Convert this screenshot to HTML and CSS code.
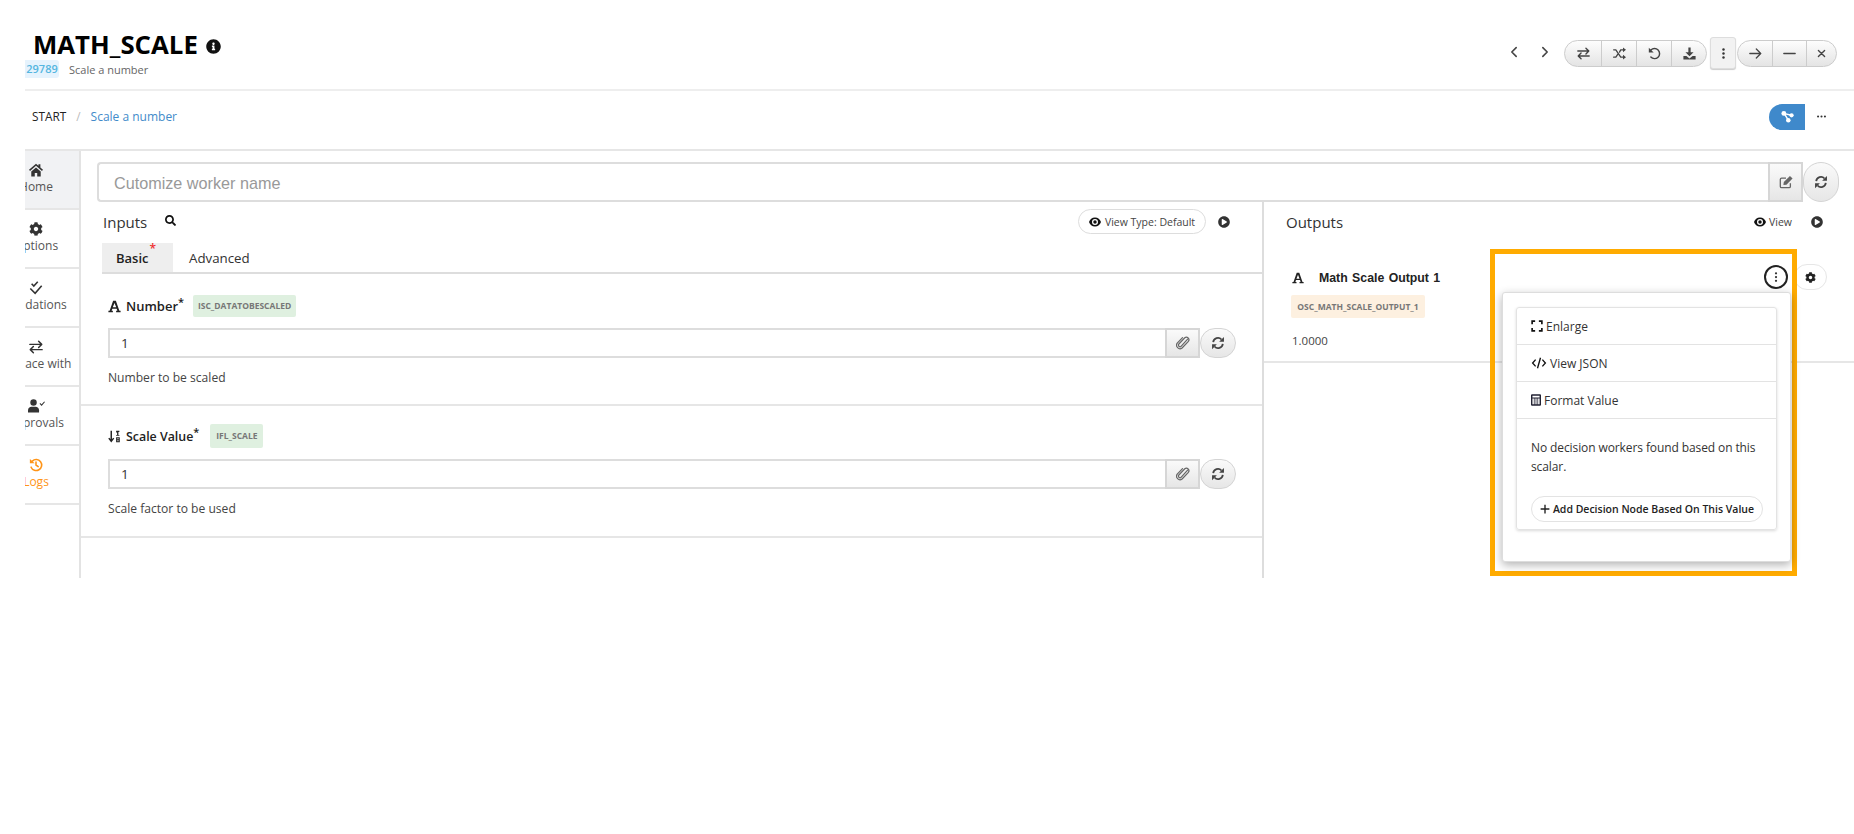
FILE: index.html
```html
<!DOCTYPE html>
<html lang="en">
<head>
<meta charset="UTF-8">
<title>MATH_SCALE</title>
<link rel="stylesheet" href="styles.css">
</head>
<body>

<!-- icon sprite -->
<svg class="sprite" xmlns="http://www.w3.org/2000/svg">
  <symbol id="i-info" viewBox="0 0 512 512"><path fill="currentColor" d="M256 8C119 8 8 119 8 256s111 248 248 248 248-111 248-248S393 8 256 8zm0 110c23 0 42 19 42 42s-19 42-42 42-42-19-42-42 19-42 42-42zm56 254c0 7-5 12-12 12h-88c-7 0-12-5-12-12v-24c0-7 5-12 12-12h12v-64h-12c-7 0-12-5-12-12v-24c0-7 5-12 12-12h64c7 0 12 5 12 12v100h12c7 0 12 5 12 12v24z"/></symbol>
  <symbol id="i-play" viewBox="0 0 512 512"><path fill="currentColor" d="M256 8C119 8 8 119 8 256s111 248 248 248 248-111 248-248S393 8 256 8zm115 273L195 382c-16 9-35-2-35-21V152c0-19 19-30 35-21l176 107c16 9 16 33 0 43z"/></symbol>
  <symbol id="i-search" viewBox="0 0 512 512"><path fill="currentColor" d="M505 442.7L405.3 343c-4.5-4.5-10.6-7-17-7H372c27.6-35.3 44-79.7 44-128C416 93.1 322.9 0 208 0S0 93.1 0 208s93.1 208 208 208c48.3 0 92.7-16.4 128-44v16.3c0 6.4 2.5 12.5 7 17l99.7 99.7c9.4 9.4 24.6 9.4 33.9 0l28.3-28.3c9.4-9.4 9.4-24.6.1-34zM208 336c-70.7 0-128-57.2-128-128 0-70.7 57.2-128 128-128 70.7 0 128 57.2 128 128 0 70.7-57.2 128-128 128z"/></symbol>
  <symbol id="i-cog" viewBox="0 0 512 512"><path fill="currentColor" d="M487.4 315.7l-42.6-24.6c4.3-23.2 4.3-47 0-70.2l42.6-24.6c4.9-2.8 7.1-8.6 5.5-14-11.1-35.6-30-67.8-54.7-94.6-3.8-4.1-10-5.1-14.8-2.3L380.8 110c-17.9-15.4-38.5-27.3-60.8-35.1V25.8c0-5.6-3.9-10.5-9.4-11.7-36.7-8.2-74.3-7.8-109.2 0-5.5 1.2-9.4 6.1-9.4 11.7V75c-22.2 7.9-42.8 19.8-60.8 35.1L88.7 85.5c-4.9-2.8-11-1.9-14.8 2.3-24.7 26.7-43.6 58.9-54.7 94.6-1.7 5.4.6 11.2 5.5 14L67.3 221c-4.3 23.2-4.3 47 0 70.2l-42.6 24.6c-4.9 2.8-7.1 8.6-5.5 14 11.1 35.6 30 67.8 54.7 94.6 3.8 4.1 10 5.1 14.8 2.3l42.6-24.6c17.9 15.4 38.5 27.3 60.8 35.1v49.2c0 5.6 3.9 10.5 9.4 11.7 36.7 8.2 74.3 7.8 109.2 0 5.5-1.2 9.4-6.1 9.4-11.7v-49.2c22.2-7.9 42.8-19.8 60.8-35.1l42.6 24.6c4.9 2.8 11 1.9 14.8-2.3 24.7-26.7 43.6-58.9 54.7-94.6 1.5-5.5-.7-11.3-5.6-14.1zM256 336c-44.1 0-80-35.9-80-80s35.9-80 80-80 80 35.9 80 80-35.9 80-80 80z"/></symbol>
  <symbol id="i-home" viewBox="0 0 16 16"><path fill="currentColor" d="M8 .8 0 7.600l1.200 1.400L8 3.200 14.800 9 16 7.600l-3-2.600V1.500h-2.200v1.600zM2.600 9.600V15.500h4v-4h2.800v4h4V9.600L8 5z"/></symbol>
  <symbol id="i-left" viewBox="0 0 16 16"><path fill="none" stroke="currentColor" stroke-width="1.800" stroke-linecap="round" stroke-linejoin="round" d="M10.500 3 5.500 8l5 5"/></symbol>
  <symbol id="i-right" viewBox="0 0 16 16"><path fill="none" stroke="currentColor" stroke-width="1.800" stroke-linecap="round" stroke-linejoin="round" d="m5.500 3 5 5-5 5"/></symbol>
  <symbol id="i-swap" viewBox="0 0 16 16"><path fill="none" stroke="currentColor" stroke-width="1.700" stroke-linecap="round" stroke-linejoin="round" d="M1 5h13.500M11 1.500 14.500 5 11 8.500M15 11H1.500M5 7.500 1.500 11 5 14.500"/></symbol>
  <symbol id="i-shuffle" viewBox="0 0 16 16"><path fill="none" stroke="currentColor" stroke-width="1.600" stroke-linecap="round" stroke-linejoin="round" d="M.8 3.500h2.700l6 9H13M.8 12.500h2.700L6 8.700M8 6.300 9.500 3.500H13"/><path fill="currentColor" d="M12.300 .5 16 3.500l-3.700 3zM12.300 9.500 16 12.500l-3.700 3z"/></symbol>
  <symbol id="i-undo" viewBox="0 0 16 16"><path fill="none" stroke="currentColor" stroke-width="1.800" stroke-linecap="round" d="M3.600 3.800A6.200 6.200 0 1 1 3.500 12.300"/><path fill="currentColor" d="M1 1l6 5.800H1z"/></symbol>
  <symbol id="i-download" viewBox="0 0 16 16"><path fill="currentColor" d="M6.600 .5h2.800v6H13L8 11.500 3 6.500h3.600zM.5 11h3.700L8 14l3.800-3h3.700v4.500H.5z"/></symbol>
  <symbol id="i-kebab" viewBox="0 0 16 16"><g fill="currentColor"><circle cx="8" cy="3" r="1.500"/><circle cx="8" cy="8" r="1.500"/><circle cx="8" cy="13" r="1.500"/></g></symbol>
  <symbol id="i-arrow" viewBox="0 0 16 16"><path fill="none" stroke="currentColor" stroke-width="1.600" stroke-linecap="round" stroke-linejoin="round" d="M1 8h13.500M9 2.500 14.500 8 9 13.500"/></symbol>
  <symbol id="i-minus" viewBox="0 0 16 16"><path fill="none" stroke="currentColor" stroke-width="1.600" stroke-linecap="round" d="M1 8h14"/></symbol>
  <symbol id="i-close" viewBox="0 0 16 16"><path fill="none" stroke="currentColor" stroke-width="2.400" stroke-linecap="round" d="m2.500 2.500 11 11M13.500 2.500l-11 11"/></symbol>
  <symbol id="i-nodes" viewBox="0 0 16 16"><path fill="none" stroke="currentColor" stroke-width="1.800" d="M4 4.500 13 6.500M4 4.500l5 8"/><circle cx="3.500" cy="4.200" r="3" fill="currentColor"/><circle cx="13" cy="6.500" r="2.600" fill="currentColor"/><circle cx="9" cy="12.500" r="2.800" fill="currentColor"/></symbol>
  <symbol id="i-dots" viewBox="0 0 16 16"><g fill="currentColor"><circle cx="3" cy="8" r="1.500"/><circle cx="8" cy="8" r="1.500"/><circle cx="13" cy="8" r="1.500"/></g></symbol>
  <symbol id="i-edit" viewBox="0 0 16 16"><path fill="none" stroke="currentColor" stroke-width="1.500" stroke-linejoin="round" d="M13 9.500V13a1.500 1.500 0 0 1-1.500 1.500H3A1.500 1.500 0 0 1 1.500 13V5A1.500 1.500 0 0 1 3 3.500h5"/><path fill="currentColor" d="M12.500 1 15.500 4 8.500 11l-3.500.5.500-3.500z"/></symbol>
  <symbol id="i-sync" viewBox="0 0 16 16"><path fill="none" stroke="currentColor" stroke-width="2" d="M2.500 7A5.500 5.500 0 0 1 12 4M13.500 9A5.500 5.500 0 0 1 4 12"/><path fill="currentColor" d="M14.800 1v5.500H9.300zM1.200 15V9.500h5.500z"/></symbol>
  <symbol id="i-checks" viewBox="0 0 16 16"><path fill="none" stroke="currentColor" stroke-width="1.800" d="m3 3.200 2.500 2.600 4.500-5M1.500 8.500l5.500 5.500 7.500-8.500"/></symbol>
  <symbol id="i-usercheck" viewBox="0 0 20 16"><circle cx="6.500" cy="4" r="3.800" fill="currentColor"/><path fill="currentColor" d="M0 15.500V13c0-2.500 2-4.200 4-4.200h5c2 0 4 1.700 4 4.200v2.500z"/><path fill="none" stroke="currentColor" stroke-width="1.200" d="m14 5 2 2 3.500-4"/></symbol>
  <symbol id="i-history" viewBox="0 0 16 16"><path fill="none" stroke="currentColor" stroke-width="1.800" stroke-linecap="round" d="M3.800 3.500A6.300 6.300 0 1 1 2.400 10.500M8 4.500V8l2.500 1.800"/><path fill="currentColor" d="M1 1l5.500 5H1z"/></symbol>
  <symbol id="i-eye" viewBox="0 0 16 16"><path fill="currentColor" fill-rule="evenodd" d="M8 2c3.900 0 6.900 2.800 8 6-1.100 3.200-4.100 6-8 6S1.100 11.200 0 8c1.100-3.200 4.100-6 8-6zM8 4A4 4 0 1 0 8 12 4 4 0 0 0 8 4z"/><circle cx="8" cy="8" r="2.300" fill="currentColor"/></symbol>
  <symbol id="i-font" viewBox="0 0 16 16"><path fill="currentColor" d="M6.300 1h3.400l4.300 12.300h1.500V15H10v-1.700h1.500l-.8-2.600H5.300l-.8 2.600H6V15H.5v-1.700H2zM8 3.800 5.900 9h4.200z"/></symbol>
  <symbol id="i-sortnum" viewBox="0 0 16 16"><path fill="none" stroke="currentColor" stroke-width="1.800" d="M4 1v12M1 10l3 4 3-4"/><path fill="currentColor" d="M10 1h4v1.600h-1.200V6h1.200v1H10V6h1.200V3H10zM10 9h4.500v6H10zm1.500 1.300v1.200h1.500v-1.200zm0 2.300v1.200h1.500v-1.200z"/></symbol>
  <symbol id="i-clip" viewBox="0 0 16 16"><path fill="none" stroke="currentColor" stroke-width="1.500" stroke-linecap="round" d="M14 3.500 6.500 12a2 2 0 0 1-3-2.700L10.800 1.700a3.100 3.100 0 0 1 4.400 4.300L7.500 14.200a4.300 4.300 0 0 1-6-6L8 1.500" transform="translate(0 .5) scale(.93)"/></symbol>
  <symbol id="i-expand" viewBox="0 0 16 16"><path fill="none" stroke="currentColor" stroke-width="2.200" d="M1.500 5.500v-4h4M10.500 1.500h4v4M14.500 10.500v4h-4M5.500 14.500h-4v-4"/></symbol>
  <symbol id="i-code" viewBox="0 0 20 16"><path fill="none" stroke="currentColor" stroke-width="1.800" d="M5.500 3.500 1.500 8l4 4.500M14.500 3.500l4 4.500-4 4.500M12 1 8 15"/></symbol>
  <symbol id="i-calc" viewBox="0 0 14 16"><path fill="currentColor" fill-rule="evenodd" d="M1.500 0h11A1.500 1.500 0 0 1 14 1.500v13a1.500 1.500 0 0 1-1.500 1.500h-11A1.500 1.500 0 0 1 0 14.500v-13A1.500 1.500 0 0 1 1.500 0zM2 2v2.500h10V2zm0 4v8h2V6zm3 0v8h1.500V6zm2.500 0v8H9V6zM10 6v8h2V6z"/></symbol>
  <symbol id="i-plus" viewBox="0 0 16 16"><path fill="none" stroke="currentColor" stroke-width="2.200" d="M8 1v14M1 8h14"/></symbol>
</svg>

<div class="page">

  <header class="topbar">
    <div class="title-block">
      <h1 class="title">MATH_SCALE <svg class="ico ico-info"><use href="#i-info"/></svg></h1>
      <div class="meta">
        <span class="id-chip">29789</span>
        <span class="subtitle">Scale a number</span>
      </div>
    </div>
    <div class="toolbar">
      <button class="nav-btn"><svg class="ico"><use href="#i-left"/></svg></button>
      <button class="nav-btn"><svg class="ico"><use href="#i-right"/></svg></button>
      <div class="btn-group group-a">
        <button><svg class="ico"><use href="#i-swap"/></svg></button>
        <button><svg class="ico"><use href="#i-shuffle"/></svg></button>
        <button><svg class="ico"><use href="#i-undo"/></svg></button>
        <button><svg class="ico"><use href="#i-download"/></svg></button>
      </div>
      <button class="kebab-btn"><svg class="ico"><use href="#i-kebab"/></svg></button>
      <div class="btn-group group-b">
        <button><svg class="ico"><use href="#i-arrow"/></svg></button>
        <button><svg class="ico"><use href="#i-minus"/></svg></button>
        <button><svg class="ico ico-close"><use href="#i-close"/></svg></button>
      </div>
    </div>
  </header>

  <nav class="crumbs">
    <div class="crumb-path">
      <span>START</span>
      <span class="crumb-sep">/</span>
      <a class="crumb-link">Scale a number</a>
    </div>
    <div class="crumb-actions">
      <button class="graph-btn"><svg class="ico"><use href="#i-nodes"/></svg></button>
      <svg class="ico ico-more"><use href="#i-dots"/></svg>
    </div>
  </nav>

  <div class="workspace">
    <aside class="sidebar">
      <div class="side-item active"><svg class="ico"><use href="#i-home"/></svg><span>Home</span></div>
      <div class="side-item"><svg class="ico"><use href="#i-cog"/></svg><span>Options</span></div>
      <div class="side-item"><svg class="ico"><use href="#i-checks"/></svg><span>Validations</span></div>
      <div class="side-item"><svg class="ico"><use href="#i-swap"/></svg><span>Replace with</span></div>
      <div class="side-item"><svg class="ico ico-wide"><use href="#i-usercheck"/></svg><span>Approvals</span></div>
      <div class="side-item logs"><svg class="ico"><use href="#i-history"/></svg><span>Logs</span></div>
    </aside>

    <main class="main">
      <div class="name-row">
        <div class="name-input">Cutomize worker name</div>
        <button class="addon addon-big"><svg class="ico"><use href="#i-edit"/></svg></button>
        <button class="round-btn round-big"><svg class="ico"><use href="#i-sync"/></svg></button>
      </div>

      <div class="panels">
        <section class="panel-inputs">
          <div class="panel-head">
            <span class="panel-title">Inputs</span>
            <svg class="ico ico-search"><use href="#i-search"/></svg>
            <button class="pill"><svg class="ico"><use href="#i-eye"/></svg>View Type: Default</button>
            <svg class="ico ico-play"><use href="#i-play"/></svg>
          </div>
          <div class="tabs">
            <div class="tab active">Basic<sup class="req">*</sup></div>
            <div class="tab">Advanced</div>
          </div>

          <div class="field">
            <div class="field-label">
              <svg class="ico"><use href="#i-font"/></svg>
              <span class="label-text">Number<sup>*</sup></span>
              <span class="chip chip-green chip-first">ISC_DATATOBESCALED</span>
            </div>
            <div class="field-input">
              <div class="value-box">1</div>
              <button class="addon"><svg class="ico"><use href="#i-clip"/></svg></button>
              <button class="round-btn"><svg class="ico"><use href="#i-sync"/></svg></button>
            </div>
            <p class="help">Number to be scaled</p>
          </div>

          <div class="field field-second">
            <div class="field-label">
              <svg class="ico"><use href="#i-sortnum"/></svg>
              <span class="label-text">Scale Value<sup>*</sup></span>
              <span class="chip chip-green chip-tall">IFL_SCALE</span>
            </div>
            <div class="field-input">
              <div class="value-box">1</div>
              <button class="addon"><svg class="ico"><use href="#i-clip"/></svg></button>
              <button class="round-btn"><svg class="ico"><use href="#i-sync"/></svg></button>
            </div>
            <p class="help">Scale factor to be used</p>
          </div>
        </section>

        <section class="panel-outputs">
          <div class="out-head">
            <span class="panel-title">Outputs</span>
            <span class="out-view"><svg class="ico"><use href="#i-eye"/></svg>View</span>
            <svg class="ico ico-play"><use href="#i-play"/></svg>
          </div>
          <div class="out-row">
            <div class="out-line">
              <svg class="ico"><use href="#i-font"/></svg>
              <span class="out-name">Math Scale Output 1</span>
              <button class="circle-kebab"><svg class="ico"><use href="#i-kebab"/></svg></button>
              <button class="circle-gear"><svg class="ico"><use href="#i-cog"/></svg></button>
            </div>
            <span class="chip chip-orange">OSC_MATH_SCALE_OUTPUT_1</span>
            <div class="out-value">1.0000</div>
          </div>
        </section>
      </div>
    </main>

    <!-- highlight box with the open menu -->
    <div class="highlight">
      <div class="popup">
        <div class="menu-card">
          <div class="menu-row"><svg class="ico"><use href="#i-expand"/></svg>Enlarge</div>
          <div class="menu-row"><svg class="ico ico-code"><use href="#i-code"/></svg>View JSON</div>
          <div class="menu-row"><svg class="ico ico-calc"><use href="#i-calc"/></svg>Format Value</div>
          <p class="menu-text">No decision workers found based on this scalar.</p>
          <button class="add-btn"><svg class="ico"><use href="#i-plus"/></svg>Add Decision Node Based On This Value</button>
        </div>
      </div>
    </div>
  </div>

</div>
</body>
</html>
```

FILE: styles.css
```css
* {
  box-sizing: border-box;
}
html, body {
  margin: 0;
  background: #fff;
}
body {
  font-family: "Open Sans", "Noto Sans", sans-serif;
  color: #222;
  font-size: 13px;
  overflow: hidden;
}
button {
  font-family: inherit;
  padding: 0;
  cursor: pointer;
}
.sprite {
  display: none;
}
.ico {
  width: 14px;
  height: 14px;
  display: block;
  flex: none;
}
.page {
  width: 1829px; /* the capture cuts the first 25px of the app off */
  margin-left: 25px;
  height: 578px;
  overflow: hidden;
}

/* top bar */
.topbar {
  height: 91px;
  border-bottom: 2px solid #eee;
  display: flex;
  justify-content: space-between;
}
.title-block {
  padding: 27px 0 0 8px;
}
.title {
  margin: 0 0 -1px;
  font-size: 25.800px;
  line-height: 34px;
  font-weight: 700;
  color: #000;
  display: flex;
  align-items: center;
  gap: 8px;
}
.ico-info {
  width: 15px;
  height: 15px;
  margin-top: 5px;
  color: #111;
}
.meta {
  display: flex;
  align-items: center;
  margin-left: -8px;
}
.id-chip {
  width: 34px;
  height: 18px;
  background: #e6f3fd;
  color: #55b6e0;
  font-size: 11px;
  font-weight: 600;
  line-height: 18px;
  text-align: center;
  border-radius: 0 3px 3px 0;
}
.subtitle {
  margin-left: 10px;
  font-size: 11px;
  color: #666;
}
.toolbar {
  display: flex;
  align-items: flex-start;
  padding: 37px 17px 0 0;
}
.nav-btn {
  width: 14px;
  height: 30px;
  border: none;
  background: none;
  color: #444;
  display: flex;
  align-items: center;
  justify-content: center;
}
.nav-btn + .nav-btn {
  margin: 0 12px 0 17px;
}
.btn-group {
  display: flex;
  height: 27px;
  margin-top: 3px;
  border: 1px solid #ccc;
  border-radius: 14px;
  overflow: hidden;
  background: linear-gradient(#fdfdfd, #e4e4e4);
}
.btn-group button {
  border: none;
  border-left: 1px solid #ccc;
  background: none;
  color: #444;
  display: flex;
  align-items: center;
  justify-content: center;
}
.btn-group button:first-child {
  border-left: none;
}
.group-a button {
  width: 35px;
}
.group-a button:first-child {
  width: 36px;
}
.group-b button {
  width: 34px;
}
.group-b button:last-child {
  width: 30px;
}
.btn-group .ico {
  width: 13px;
  height: 13px;
}
.btn-group .ico-close {
  width: 9px;
  height: 9px;
}
.kebab-btn {
  width: 26px;
  height: 32px;
  margin: 0 1px 0 3px;
  border: 1px solid #ddd;
  border-radius: 3px;
  background: #f2f2f2;
  box-shadow: 0 1px 1px #ccc;
  color: #333;
  display: flex;
  align-items: center;
  justify-content: center;
}
.kebab-btn .ico {
  width: 13px;
  height: 13px;
}

/* breadcrumb */
.crumbs {
  height: 60px;
  border-bottom: 2px solid #e6e6e6;
  display: flex;
  justify-content: space-between;
  align-items: center;
  font-size: 11.800px;
  color: #222;
}
.crumb-path {
  display: flex;
  padding: 0 0 8px 7px;
}
.crumb-sep {
  margin: 0 10px;
  color: #bbb;
}
.crumb-link {
  font-size: 12px;
  color: #428bca;
}
.crumb-actions {
  display: flex;
  align-items: center;
  padding: 0 27px 7px 0;
}
.graph-btn {
  width: 36px;
  height: 26px;
  border: none;
  border-radius: 13px 0 0 13px;
  background: #3f89cb;
  color: #fff;
  display: flex;
  align-items: center;
  justify-content: center;
}
.graph-btn .ico {
  width: 13px;
  height: 13px;
}
.ico-more {
  width: 11px;
  height: 11px;
  margin-left: 11px;
  color: #333;
}

/* main layout */
.workspace {
  display: flex;
  position: relative;
  height: 427px;
}
.sidebar {
  width: 56px;
  border-right: 2px solid #e3e3e3;
  overflow: hidden;
  flex: none;
}
.side-item {
  width: 88px;
  height: 59px;
  margin-left: -33px;
  padding-top: 12px;
  border-bottom: 2px solid #e6e6e6;
  display: flex;
  flex-direction: column;
  align-items: center;
  font-size: 12px;
  color: #555;
  white-space: nowrap;
}
.side-item .ico {
  margin-bottom: 1px;
  color: #333;
}
.side-item.active {
  background: #f1f2f4;
}
.side-item.logs,
.side-item.logs .ico {
  color: #ff9416;
}
.ico-wide {
  width: 17px;
}
.main {
  flex: 1;
  min-width: 0;
  display: flex;
  flex-direction: column;
}
.name-row {
  display: flex;
  padding: 11px 15px 0 16px;
}
.name-input {
  flex: 1;
  height: 40px;
  border: 2px solid #ddd;
  border-right: none;
  border-radius: 4px 0 0 4px;
  padding-left: 15px;
  font-family: "Liberation Sans", Arial, sans-serif;
  font-size: 16.200px;
  line-height: 38px;
  color: #999;
}
.addon {
  width: 35px;
  height: 30px;
  border: 2px solid #d6d6d6;
  background: linear-gradient(#fafafa, #e6e6e6);
  color: #666;
  display: flex;
  align-items: center;
  justify-content: center;
}
.addon-big {
  height: 40px;
}
.round-btn {
  width: 36px;
  height: 30px;
  margin-left: 0;
  border: 1px solid #d4d4d4;
  border-radius: 18px;
  background: linear-gradient(#fafafa, #e6e6e6);
  color: #444;
  display: flex;
  align-items: center;
  justify-content: center;
}
.round-big {
  height: 40px;
}
.panels {
  flex: 1;
  display: flex;
}
.panel-inputs {
  width: 1183px;
  flex: none;
  border-right: 2px solid #ddd;
}
.panel-head {
  height: 41px;
  display: flex;
  align-items: center;
  padding: 0 32px 2px 22px;
}
.panel-title {
  font-size: 15px;
  color: #333;
}
.ico-search {
  width: 11px;
  height: 11px;
  margin: 0 0 2px 18px;
  color: #111;
}
.pill {
  width: 128px;
  height: 25px;
  margin: 0 12px 0 auto;
  border: 1px solid #ddd;
  border-radius: 13px;
  background: #fff;
  font-size: 10.500px;
  color: #444;
  display: flex;
  align-items: center;
  justify-content: center;
  gap: 4px;
}
.pill .ico {
  width: 12px;
  height: 12px;
  color: #111;
}
.ico-play {
  width: 12px;
  height: 12px;
  color: #333;
}
.tabs {
  margin-left: 21px;
  height: 31px;
  display: flex;
  border-bottom: 2px solid #ddd;
}
.tab {
  height: 29px;
  padding: 0 16px;
  font-size: 13.300px;
  line-height: 30px;
  color: #333;
}
.tab.active {
  width: 71px;
  padding: 0 0 0 14px;
  background: #eee;
  color: #222;
  font-size: 13px;
  font-weight: 600;
  position: relative;
}
.req {
  color: #f03030;
  font-size: 12px;
  position: absolute;
  top: -9px;
  margin-left: 1px;
}
.field {
  height: 132px;
  padding: 21px 26px 0 27px;
  border-bottom: 2px solid #e6e6e6;
}
.field-second {
  height: 132px;
  padding-top: 18px;
}
.field-label {
  display: flex;
  align-items: center;
  height: 22px;
  margin-bottom: 11px;
}
.field-second .field-label {
  height: 24px;
}
.field-label .ico {
  width: 13px;
  height: 13px;
  color: #222;
}
.label-text {
  margin-left: 5px;
  font-size: 13px;
  font-weight: 600;
  color: #222;
}
.field-second .label-text {
  font-size: 12.400px;
}
.label-text sup {
  font-size: 11px;
  line-height: 0;
}
.chip {
  display: inline-block;
  font-size: 8.500px;
  font-weight: 700;
  color: #777;
  border-radius: 2px;
  text-align: center;
  white-space: nowrap;
}
.chip-green {
  background: #dff0e0;
  height: 22px;
  line-height: 22px;
  margin-left: 9px;
}
.chip-first {
  width: 103px;
}
.chip-tall {
  width: 53px;
  height: 24px;
  line-height: 24px;
  margin-left: 11px;
}
.chip-orange {
  background: #fdf0e0;
  width: 134px;
  height: 23px;
  line-height: 23px;
  margin: 5px 0 0 -1px;
}
.field-input {
  display: flex;
}
.value-box {
  flex: 1;
  height: 30px;
  border: 2px solid #ddd;
  border-right: none;
  padding-left: 11px;
  font-size: 13.500px;
  line-height: 27px;
  color: #333;
}
.help {
  margin: 10px 0 0;
  font-size: 12.100px;
  line-height: 20px;
  color: #444;
}

/* outputs */
.panel-outputs {
  flex: 1;
  min-width: 0;
}
.out-head {
  height: 41px;
  display: flex;
  align-items: center;
  padding: 0 31px 2px 22px;
}
.out-view {
  margin: 0 19px 0 auto;
  display: flex;
  align-items: center;
  gap: 3px;
  font-size: 10.500px;
  color: #444;
}
.out-view .ico {
  width: 12px;
  height: 12px;
  color: #111;
}
.out-row {
  height: 120px;
  padding: 21px 27px 0 28px;
  border-bottom: 2px solid #e6e6e6;
}
.out-line {
  display: flex;
  align-items: center;
  height: 26px;
}
.out-line > .ico {
  width: 12px;
  height: 12px;
  margin-top: 1px;
  color: #222;
}
.out-name {
  margin: 1px 0 0 15px;
  font-family: "Liberation Sans", Arial, sans-serif;
  font-size: 12.300px;
  font-weight: 700;
  word-spacing: 1px;
  color: #222;
}
.circle-kebab {
  width: 24px;
  height: 24px;
  margin-left: auto;
  border: 2px solid #222;
  border-radius: 50%;
  background: #fff;
  color: #333;
  display: flex;
  align-items: center;
  justify-content: center;
}
.circle-kebab .ico {
  width: 12px;
  height: 12px;
}
.circle-gear {
  width: 33px;
  height: 26px;
  margin-left: 6px;
  border: 1px solid #e6e6e6;
  border-radius: 13px;
  background: #fff;
  color: #222;
  display: flex;
  align-items: center;
  justify-content: center;
}
.circle-gear .ico {
  width: 11px;
  height: 11px;
}
.out-value {
  margin-top: 15px;
  font-size: 11.500px;
  color: #444;
}

/* highlight and popup lie over the outputs panel */
.highlight {
  position: absolute;
  left: 1465px;
  top: 98px;
  width: 307px;
  height: 327px;
  border: 5px solid #ffab00;
}
.popup {
  width: 289px;
  height: 270px;
  margin: 38px 0 0 7px;
  padding: 14px 13px;
  background: #fff;
  border: 1px solid #ddd;
  border-radius: 3px;
  box-shadow: 0 3px 10px rgba(0, 0, 0, 0.3);
}
.menu-card {
  height: 223px;
  border: 1px solid #e3e3e3;
  border-radius: 3px;
  box-shadow: 0 1px 3px rgba(0, 0, 0, 0.15);
}
.menu-row {
  height: 37px;
  padding-left: 14px;
  border-bottom: 1px solid #e3e3e3;
  display: flex;
  align-items: center;
  gap: 3px;
  font-size: 12px;
  color: #333;
}
.menu-row .ico {
  width: 12px;
  height: 12px;
  color: #111;
}
.menu-row .ico-code {
  width: 16px;
  height: 12px;
}
.menu-row .ico-calc {
  width: 10px;
  height: 12px;
  color: #223;
}
.menu-text {
  margin: 19px 14px 0;
  font-size: 12px;
  letter-spacing: -0.100px;
  line-height: 19px;
  color: #333;
}
.add-btn {
  width: 232px;
  height: 26px;
  margin: 20px 0 0 14px;
  border: 1px solid #e3e3e3;
  border-radius: 13px;
  background: #fff;
  font-size: 10.500px;
  font-weight: 600;
  color: #222;
  display: flex;
  align-items: center;
  justify-content: center;
  gap: 3px;
  white-space: nowrap;
}
.add-btn .ico {
  width: 10px;
  height: 10px;
}
```
